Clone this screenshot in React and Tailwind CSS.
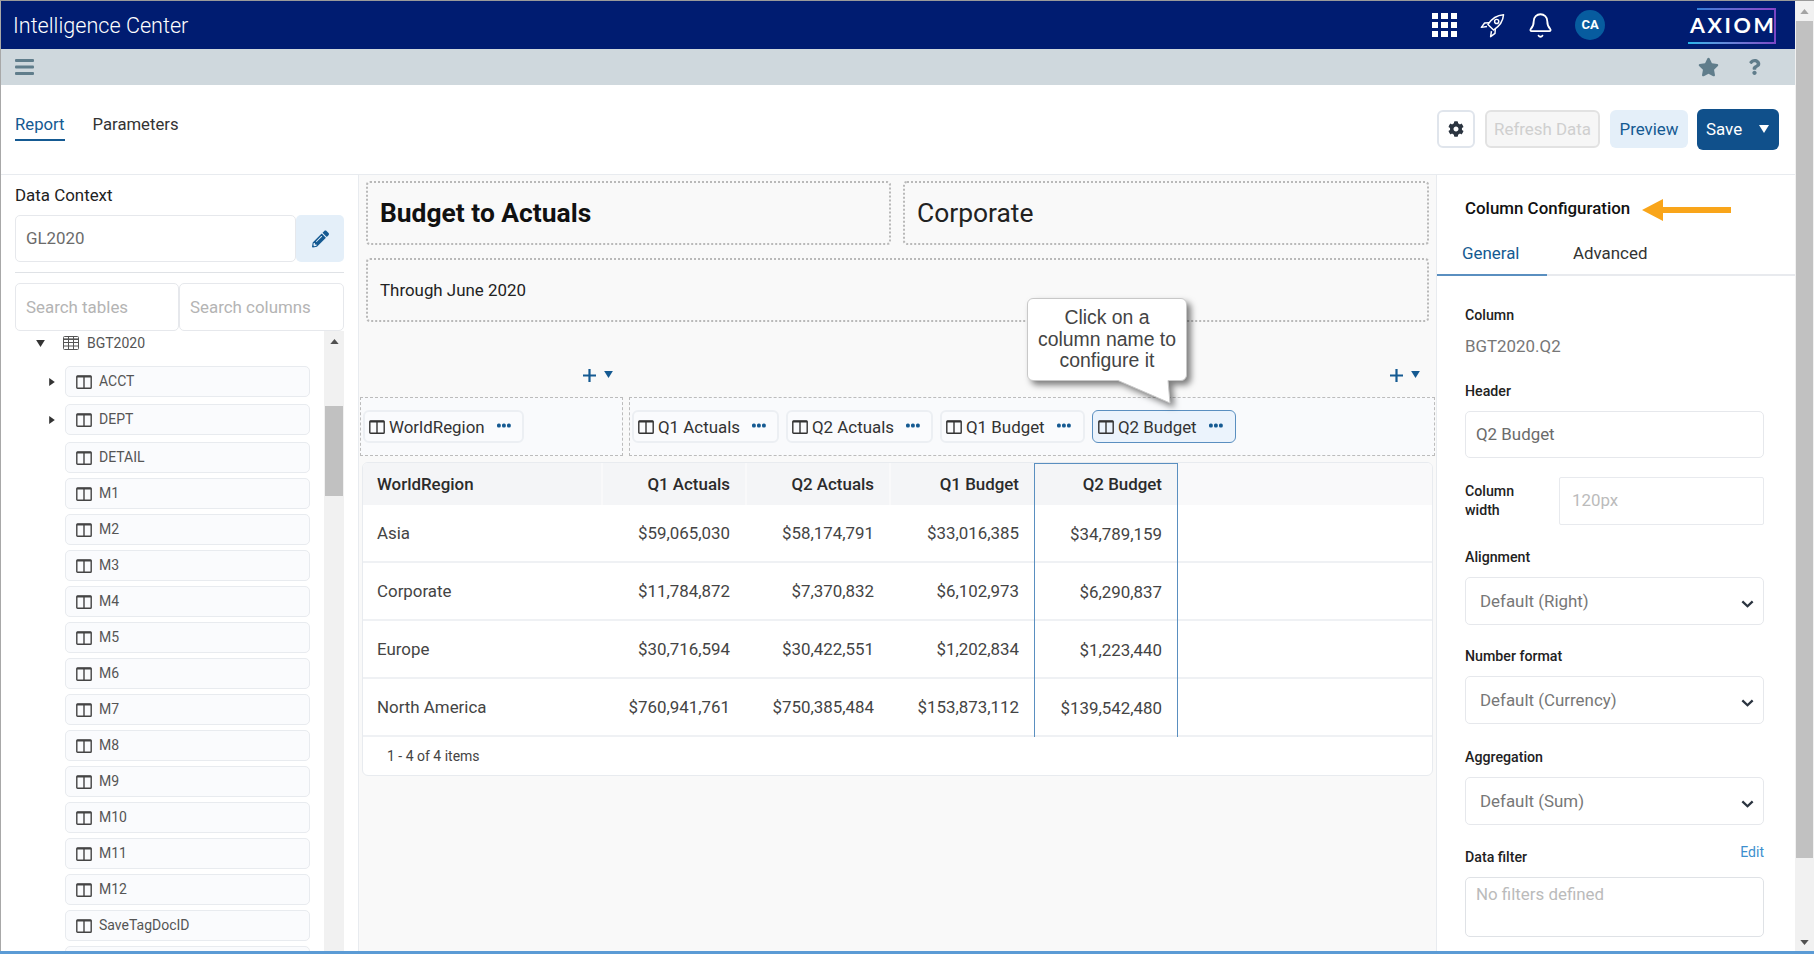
import React from "react";
import { Bell } from "lucide-react";
import { FaPencilAlt, FaCog, FaStar, FaQuestion } from "react-icons/fa";

const ColIcon = ({ className = "" }) => (
  <svg viewBox="0 0 16 14" className={`w-[16px] h-[14px] shrink-0 ${className}`} fill="none" stroke="currentColor" strokeWidth="1.4">
    <rect x="0.8" y="1" width="14.4" height="12.2" rx="0.8" />
    <path d="M0.8 1.6H15.2" strokeWidth="1.8" />
    <path d="M8 1V13" />
  </svg>
);

const TableIcon = () => (
  <svg viewBox="0 0 16 14" className="w-[16px] h-[14px] shrink-0 text-[#555]" fill="none" stroke="currentColor" strokeWidth="1">
    <rect x="0.5" y="0.5" width="15" height="13" rx="1" />
    <path d="M0.5 3.2H15.5" strokeWidth="1.6" />
    <path d="M0.5 6.5H15.5M0.5 10H15.5M5.5 1V13.5M10.5 1V13.5" />
  </svg>
);

const Caret = ({ className = "" }) => (
  <svg viewBox="0 0 10 8" className={`w-[9px] h-[7px] shrink-0 ${className}`} fill="currentColor">
    <path d="M0 0H10L5 8Z" />
  </svg>
);

const CaretRight = () => (
  <svg viewBox="0 0 7 10" className="w-[6px] h-[8px] text-[#333]" fill="currentColor">
    <path d="M0 0L7 5L0 10Z" />
  </svg>
);

const Dots = () => (
  <svg viewBox="0 0 14 5" className="w-[14px] h-[5px] shrink-0 text-[#155a92]" fill="currentColor">
    <rect x="0" y="0.4" width="3.8" height="4.2" rx="1.6" />
    <rect x="5" y="0.4" width="3.8" height="4.2" rx="1.6" />
    <rect x="10" y="0.4" width="3.8" height="4.2" rx="1.6" />
  </svg>
);

const Plus = () => (
  <div className="flex items-center gap-[8px] text-[#155a92]">
    <svg viewBox="0 0 13 13" className="w-[13px] h-[13px]" fill="currentColor">
      <path d="M5.4 0H7.6V5.4H13V7.6H7.6V13H5.4V7.6H0V5.4H5.4Z" />
    </svg>
    <Caret className="mb-[3px]" />
  </div>
);

const Chevron = () => (
  <svg viewBox="0 0 14 9" className="w-[13px] h-[8px] text-[#2b3440] mt-[5px]" fill="none" stroke="currentColor" strokeWidth="2.6">
    <path d="M1.2 1.5L7 7L12.8 1.5" />
  </svg>
);

const Rocket = () => (
  <svg viewBox="0 0 24 24" className="w-[25px] h-[25px] text-white" fill="none" stroke="currentColor" strokeWidth="1.4" strokeLinejoin="round">
    <path d="M22.6 1.6C16.5 2 11.3 5.2 7.6 11L13 16.4C18.8 12.7 22.2 7.6 22.6 1.6Z" />
    <circle cx="16" cy="8.1" r="2" />
    <path d="M8.8 9.3L4.4 9.6L1.3 13.8L6.7 13" />
    <path d="M14.7 15.3L14.4 19.6L10.2 22.7L11 17.3" />
  </svg>
);

const Logo = () => (
  <div className="relative w-[88px] h-[36px] mt-[1px] flex items-center justify-start">
    <span className="pl-[2px] text-[21.5px] leading-none font-bold tracking-[2.6px] text-white font-['Lato','Roboto',sans-serif]">AXIOM</span>
    <div className="absolute left-[9px] right-0 top-0 h-[2px] bg-gradient-to-r from-[#2f7fd8] to-[#8a43c8]" />
    <div className="absolute right-0 top-0 bottom-0 w-[2px] bg-[#7a46c4]" />
    <div className="absolute left-0 right-0 bottom-0 h-[2px] bg-gradient-to-r from-[#22b6ea] to-[#7a46c4]" />
  </div>
);

const treeRows = [
  { n: "ACCT", e: true, x: "mb-[2px]" },
  { n: "DEPT", e: true, x: "mb-[2px]" },
  { n: "DETAIL" },
  { n: "M1" }, { n: "M2" }, { n: "M3" }, { n: "M4" }, { n: "M5" }, { n: "M6" },
  { n: "M7" }, { n: "M8" }, { n: "M9" }, { n: "M10" }, { n: "M11" }, { n: "M12" },
  { n: "SaveTagDocID" }, { n: "" },
];

const data = [
  ["Asia", "$59,065,030", "$58,174,791", "$33,016,385", "$34,789,159"],
  ["Corporate", "$11,784,872", "$7,370,832", "$6,102,973", "$6,290,837"],
  ["Europe", "$30,716,594", "$30,422,551", "$1,202,834", "$1,223,440"],
  ["North America", "$760,941,761", "$750,385,484", "$153,873,112", "$139,542,480"],
];

const Chip = ({ label, w, selected }) => (
  <div className={`${w} h-[33px] shrink-0 flex items-center rounded-[6px] ${selected ? "pl-[5px] bg-[#ebf3fc] border border-[#5a8fc0]" : "pl-[4px] bg-[#fafbfd] border-2 border-[#eceff3]"}`}>
    <ColIcon className="text-[#333]" />
    <span className="ml-[4px] pt-[2px] text-[16.9px] text-[#333] leading-none">{label}</span>
    <span className="ml-[12px] mb-[2px]"><Dots /></span>
  </div>
);

const Field = ({ label, className = "", children, right }) => (
  <div className={className}>
    <div className="flex justify-between items-start h-[20px]">
      <span className="text-[14.2px] leading-[20px] font-medium text-[#222]">{label}</span>
      {right}
    </div>
    {children}
  </div>
);

const Select = ({ value }) => (
  <div className="mt-[10px] h-[48px] border border-[#e6e8ec] rounded-[5px] bg-white flex items-center justify-between pl-[14px] pr-[9px] text-[16.9px] text-[#777]">
    <span className="pt-[1px]">{value}</span>
    <Chevron />
  </div>
);

export default function App() {
  return (
    <div className="w-[1814px] h-[954px] overflow-hidden flex flex-col bg-white font-['Roboto',sans-serif] border-t border-[#9a9a9a]">
      <div className="flex flex-1 min-h-0 border-l border-[#a8a8a8]">
        <div className="w-[1794px] flex flex-col min-h-0">
          {/* header */}
          <header className="h-[48px] shrink-0 bg-[#001c71] flex items-center pl-[12px] pr-[19px]">
            <span className="pt-[2px] text-[21.6px] font-light text-white">Intelligence Center</span>
            <div className="ml-auto flex items-center">
              <div className="grid grid-cols-3 gap-[3px] w-[25px]">
                {Array.from({ length: 9 }).map((_, i) => (
                  <div key={i} className="w-[6.3px] h-[6.3px] bg-white" />
                ))}
              </div>
              <div className="ml-[23px]"><Rocket /></div>
              <div className="ml-[22px]"><Bell size={27} strokeWidth={1.6} className="text-white" /></div>
              <div className="ml-[21px] w-[30px] h-[30px] rounded-full bg-[#075c9f] flex items-center justify-center text-[13px] font-bold text-white">CA</div>
              <div className="ml-[83px]"><Logo /></div>
            </div>
          </header>
          {/* toolbar */}
          <div className="h-[36px] shrink-0 bg-[#cfd8dd] flex items-center pl-[14px] pr-[34px] text-[#607d8b]">
            <svg viewBox="0 0 19 16" className="w-[19px] h-[16px]" fill="currentColor">
              <rect width="19" height="3" y="0" rx="1" />
              <rect width="19" height="3" y="6.5" rx="1" />
              <rect width="19" height="3" y="13" rx="1" />
            </svg>
            <FaStar className="ml-auto w-[21px] h-[20px]" />
            <FaQuestion className="ml-[29px] w-[13px] h-[16px]" />
          </div>
          {/* tabs + actions */}
          <div className="h-[90px] shrink-0 border-b border-[#e8ebef] flex pl-[14px] pr-[16px]">
            <nav className="flex items-start pt-[24px] gap-[28px] text-[16.7px]">
              <a className="h-[32px] text-[#155a92] border-b-[2px] border-[#155a92] leading-[31px]">Report</a>
              <a className="h-[32px] text-[#333] leading-[31px]">Parameters</a>
            </nav>
            <div className="ml-auto flex items-center gap-[10px] pb-[1px] text-[16.9px]">
              <button className="w-[38px] h-[38px] rounded-[6px] border-2 border-[#e0e5ec] bg-white flex items-center justify-center text-[#2b3440]">
                <FaCog className="w-[16px] h-[16px]" />
              </button>
              <button className="w-[115px] h-[38px] pt-[1px] rounded-[6px] border-2 border-[#e2e2e2] bg-[#f6f6f6] text-[#cfcfcf]">Refresh Data</button>
              <button className="w-[78px] h-[38px] pt-[1px] rounded-[6px] bg-[#e4eff9] text-[#155a92]">Preview</button>
              <button className="w-[82px] h-[41px] pt-[1px] ml-[-1px] rounded-[6px] bg-[#10508b] text-white flex items-center pl-[9px]">
                Save
                <Caret className="ml-[17px] w-[10px] h-[8px] mb-[1px]" />
              </button>
            </div>
          </div>
          {/* body */}
          <div className="flex-1 min-h-0 flex">
            {/* left */}
            <aside className="w-[358px] shrink-0 border-r border-[#e8ebef] pl-[14px] pr-[14px] pt-[10px] flex flex-col min-h-0">
              <div className="text-[16.9px] leading-[20px] h-[20px] text-[#222]">Data Context</div>
              <div className="mt-[10px] flex h-[47px] shrink-0">
                <div className="w-[281px] pt-[1px] border border-[#e6e8ec] rounded-[5px] flex items-center pl-[10px] text-[16.9px] text-[#6b6b6b]">GL2020</div>
                <div className="w-[48px] bg-[#e4eff9] rounded-[5px] flex items-center justify-center text-[#155a92]">
                  <FaPencilAlt className="w-[17px] h-[18px]" />
                </div>
              </div>
              <div className="mt-[10px] h-px shrink-0 bg-[#dfe2e6]" />
              <div className="mt-[10px] flex h-[48px] shrink-0 text-[16.9px] text-[#b4b4b4]">
                <div className="w-[164px] pt-[1px] border border-[#e6e8ec] rounded-[5px] flex items-center pl-[10px]">Search tables</div>
                <div className="w-[165px] pt-[1px] border border-[#e6e8ec] rounded-[5px] flex items-center pl-[10px]">Search columns</div>
              </div>
              <div className="flex-1 min-h-0 flex overflow-hidden">
                <div className="w-[309px] shrink-0">
                  <div className="h-[24px] flex items-center">
                    <Caret className="ml-[21px] w-[8px] h-[6px] text-[#333]" />
                    <span className="ml-[18px]"><TableIcon /></span>
                    <span className="ml-[8px] text-[14px] text-[#555]">BGT2020</span>
                  </div>
                  <div className="mt-[11px] flex flex-col gap-[5px]">
                    {treeRows.map((r, i) => (
                      <div key={i} className={`flex items-center ${r.x || ""}`}>
                        <div className="w-[50px] h-[31px] shrink-0 pl-[34px] flex items-center">{r.e && <CaretRight />}</div>
                        <div className="w-[245px] h-[31px] shrink-0 border border-[#e8ebef] bg-[#fafbfd] rounded-[5px] flex items-center pl-[10px]">
                          <ColIcon className="text-[#444]" />
                          <span className="ml-[7px] text-[14px] text-[#555]">{r.n}</span>
                        </div>
                      </div>
                    ))}
                  </div>
                </div>
                <div className="w-[20px] shrink-0 bg-[#f1f1f1] flex flex-col items-center">
                  <svg viewBox="0 0 10 6" className="w-[9px] h-[5px] mt-[8px] text-[#505050]" fill="currentColor"><path d="M5 0L10 6H0Z" /></svg>
                  <div className="mt-[62px] w-[18px] h-[90px] bg-[#c1c1c1]" />
                </div>
              </div>
            </aside>
            {/* center */}
            <main className="relative w-[1078px] shrink-0 bg-[#f9f9f9] border-r border-[#e8ebef] pt-[6px] flex flex-col">
              <div className="flex gap-[12px] px-[7px] h-[64px]">
                <div className="w-[525px] pt-[2px] border-2 border-dotted border-[#b9b9b9] rounded-[4px] flex items-center pl-[12px] text-[26.4px] font-bold text-[#111]">Budget to Actuals</div>
                <div className="w-[526px] pt-[2px] border-2 border-dotted border-[#b9b9b9] rounded-[4px] flex items-center pl-[12px] text-[26.4px] text-[#222]">Corporate</div>
              </div>
              <div className="mt-[13px] mx-[7px] w-[1063px] h-[64px] pt-[2px] border-2 border-dotted border-[#b9b9b9] rounded-[4px] flex items-center pl-[12px] text-[16.9px] text-[#222]">Through June 2020</div>

              <div className="flex ml-[1px] mt-[75px] gap-[6px]">
                <div className="w-[263px] relative h-[59px] border border-dashed border-[#bcbcbc] bg-[#f9fafc] flex items-center pl-[2px]">
                  <div className="absolute right-[9px] top-[-29px]"><Plus /></div>
                  <Chip label="WorldRegion" w="w-[161px]" />
                </div>
                <div className="w-[806px] relative h-[59px] border border-dashed border-[#bcbcbc] bg-[#f9fafc] flex items-center pl-[2px] gap-[7px]">
                  <div className="absolute right-[14px] top-[-29px]"><Plus /></div>
                  <Chip label="Q1 Actuals" w="w-[147px]" />
                  <Chip label="Q2 Actuals" w="w-[147px]" />
                  <Chip label="Q1 Budget" w="w-[145px]" />
                  <Chip label="Q2 Budget" w="w-[144px]" selected />
                </div>
              </div>

              <div className="ml-[3px] mt-[6px] w-[1071px] h-[314px] border border-[#e8ebef] rounded-[6px] bg-white overflow-hidden">
                <div className="grid grid-cols-[240px_144px_144px_143px_144px_1fr] h-[42px] bg-[#f9f9fa] text-[16.9px] font-medium text-[#2b2b2b]">
                  <div className="bg-[#f4f5f7] mr-[2px] pt-[1px] flex items-center pl-[14px]">WorldRegion</div>
                  <div className="bg-[#f4f5f7] mr-[2px] pt-[1px] flex items-center justify-end pr-[15px]">Q1 Actuals</div>
                  <div className="bg-[#f4f5f7] mr-[2px] pt-[1px] flex items-center justify-end pr-[15px]">Q2 Actuals</div>
                  <div className="bg-[#f4f5f7] pt-[1px] flex items-center justify-end pr-[15px]">Q1 Budget</div>
                  <div className="bg-[#f4f5f7] pt-[1px] border-x border-t border-[#5a8fc0] flex items-center justify-end pr-[15px]">Q2 Budget</div>
                  <div />
                </div>
                {data.map((row, i) => (
                  <div key={i} className="grid grid-cols-[238px_144px_144px_145px_144px_1fr] h-[58px] text-[16.9px] text-[#444] border-b-2 border-[#eff1f4]">
                    <div className="flex items-center pt-[1px] pl-[14px]">{row[0]}</div>
                    <div className="flex items-center pt-[1px] justify-end pr-[15px]">{row[1]}</div>
                    <div className="flex items-center pt-[1px] justify-end pr-[15px]">{row[2]}</div>
                    <div className="flex items-center pt-[1px] justify-end pr-[15px]">{row[3]}</div>
                    <div className="flex items-center pt-[1px] justify-end pr-[15px] border-x border-[#5a8fc0] -mb-[2px] relative">{row[4]}</div>
                    <div />
                  </div>
                ))}
                <div className="h-[38px] flex items-center pl-[24px] text-[14px] text-[#444]">1 - 4 of 4 items</div>
              </div>

              {/* callout */}
              <div className="absolute left-[668px] top-[123px] w-[160px] h-[106px]">
                <svg viewBox="0 0 160 106" className="absolute inset-0 w-[160px] h-[106px] drop-shadow-[4px_4px_3px_rgba(0,0,0,0.5)]">
                  <path d="M6 .5H154a5.5 5.5 0 0 1 5.5 5.5V77a5.5 5.5 0 0 1-5.5 5.5H141L143 105L91 82.5H6A5.5 5.5 0 0 1 .5 77V6A5.5 5.5 0 0 1 6 .5Z" fill="#fff" stroke="#c8c8c8" />
                </svg>
                <div className="relative pt-[9px] text-center text-[19.4px] leading-[21.7px] text-[#444] font-['Liberation_Sans',Arial,sans-serif]">
                  Click on a<br />column name to<br />configure it
                </div>
              </div>
            </main>
            {/* right */}
            <aside className="flex-1 min-w-0 flex flex-col min-h-0 overflow-hidden">
              <div className="h-[67px] shrink-0 flex items-center pl-[28px]">
                <span className="text-[16.9px] font-medium text-[#111]">Column Configuration</span>
                <svg viewBox="0 0 89 22" className="w-[89px] h-[22px] ml-[12px] mt-[2px] text-[#f9a51a]" fill="currentColor">
                  <path d="M0 11L21 0V8H89V14H21V22Z" />
                </svg>
              </div>
              <div className="h-[34px] shrink-0 flex border-b-2 border-[#e8eaee] text-[16.9px] leading-[22px]">
                <div className="w-[110px] h-[34px] border-b-2 border-[#5a8fc0] pl-[25px] text-[#155a92]">General</div>
                <div className="ml-[26px] text-[#333]">Advanced</div>
              </div>
              <div className="pl-[28px] w-[327px] shrink-0">
                <Field label="Column" className="mt-[29px]">
                  <div className="mt-[9px] text-[16.9px] leading-[24px] text-[#777]">BGT2020.Q2</div>
                </Field>
                <Field label="Header" className="mt-[23px]">
                  <div className="mt-[10px] h-[47px] pt-[1px] border border-[#e6e8ec] rounded-[5px] flex items-center pl-[10px] text-[16.9px] text-[#6b6b6b]">Q2 Budget</div>
                </Field>
                <div className="mt-[19px] flex items-center h-[48px]">
                  <span className="w-[94px] text-[14.2px] leading-[19.5px] font-medium text-[#222]">Column<br />width</span>
                  <div className="flex-1 h-[48px] border border-[#e8eaee] rounded-[2px] flex items-center pl-[12px] text-[16.9px] text-[#bbb]">120px</div>
                </div>
                <Field label="Alignment" className="mt-[22px]"><Select value="Default (Right)" /></Field>
                <Field label="Number format" className="mt-[21px]"><Select value="Default (Currency)" /></Field>
                <Field label="Aggregation" className="mt-[23px]"><Select value="Default (Sum)" /></Field>
                <Field label="Data filter" className="mt-[22px]" right={<span className="-mt-[2px] text-[14px] leading-[14px] text-[#3d8fce]">Edit</span>}>
                  <div className="mt-[10px] h-[60px] border border-[#dfe2e6] rounded-[5px] pl-[10px] pt-[4px] text-[16.9px] text-[#bbb]">No filters defined</div>
                </Field>
              </div>
            </aside>
          </div>
        </div>
        {/* page scrollbar */}
        <div className="w-[19px] shrink-0 bg-[#f1f1f1] flex flex-col items-center">
          <svg viewBox="0 0 10 6" className="w-[9px] h-[5px] mt-[8px] text-[#a3a3a3]" fill="currentColor"><path d="M5 0L10 6H0Z" /></svg>
          <div className="mt-[7px] w-[17px] h-[837px] bg-[#c1c1c1] mr-[1px]" />
          <svg viewBox="0 0 10 6" className="w-[9px] h-[5px] mt-[82px] text-[#505050]" fill="currentColor"><path d="M0 0H10L5 6Z" /></svg>
        </div>
      </div>
      <div className="h-[3px] shrink-0 bg-[#5b9bd5]" />
    </div>
  );
}
